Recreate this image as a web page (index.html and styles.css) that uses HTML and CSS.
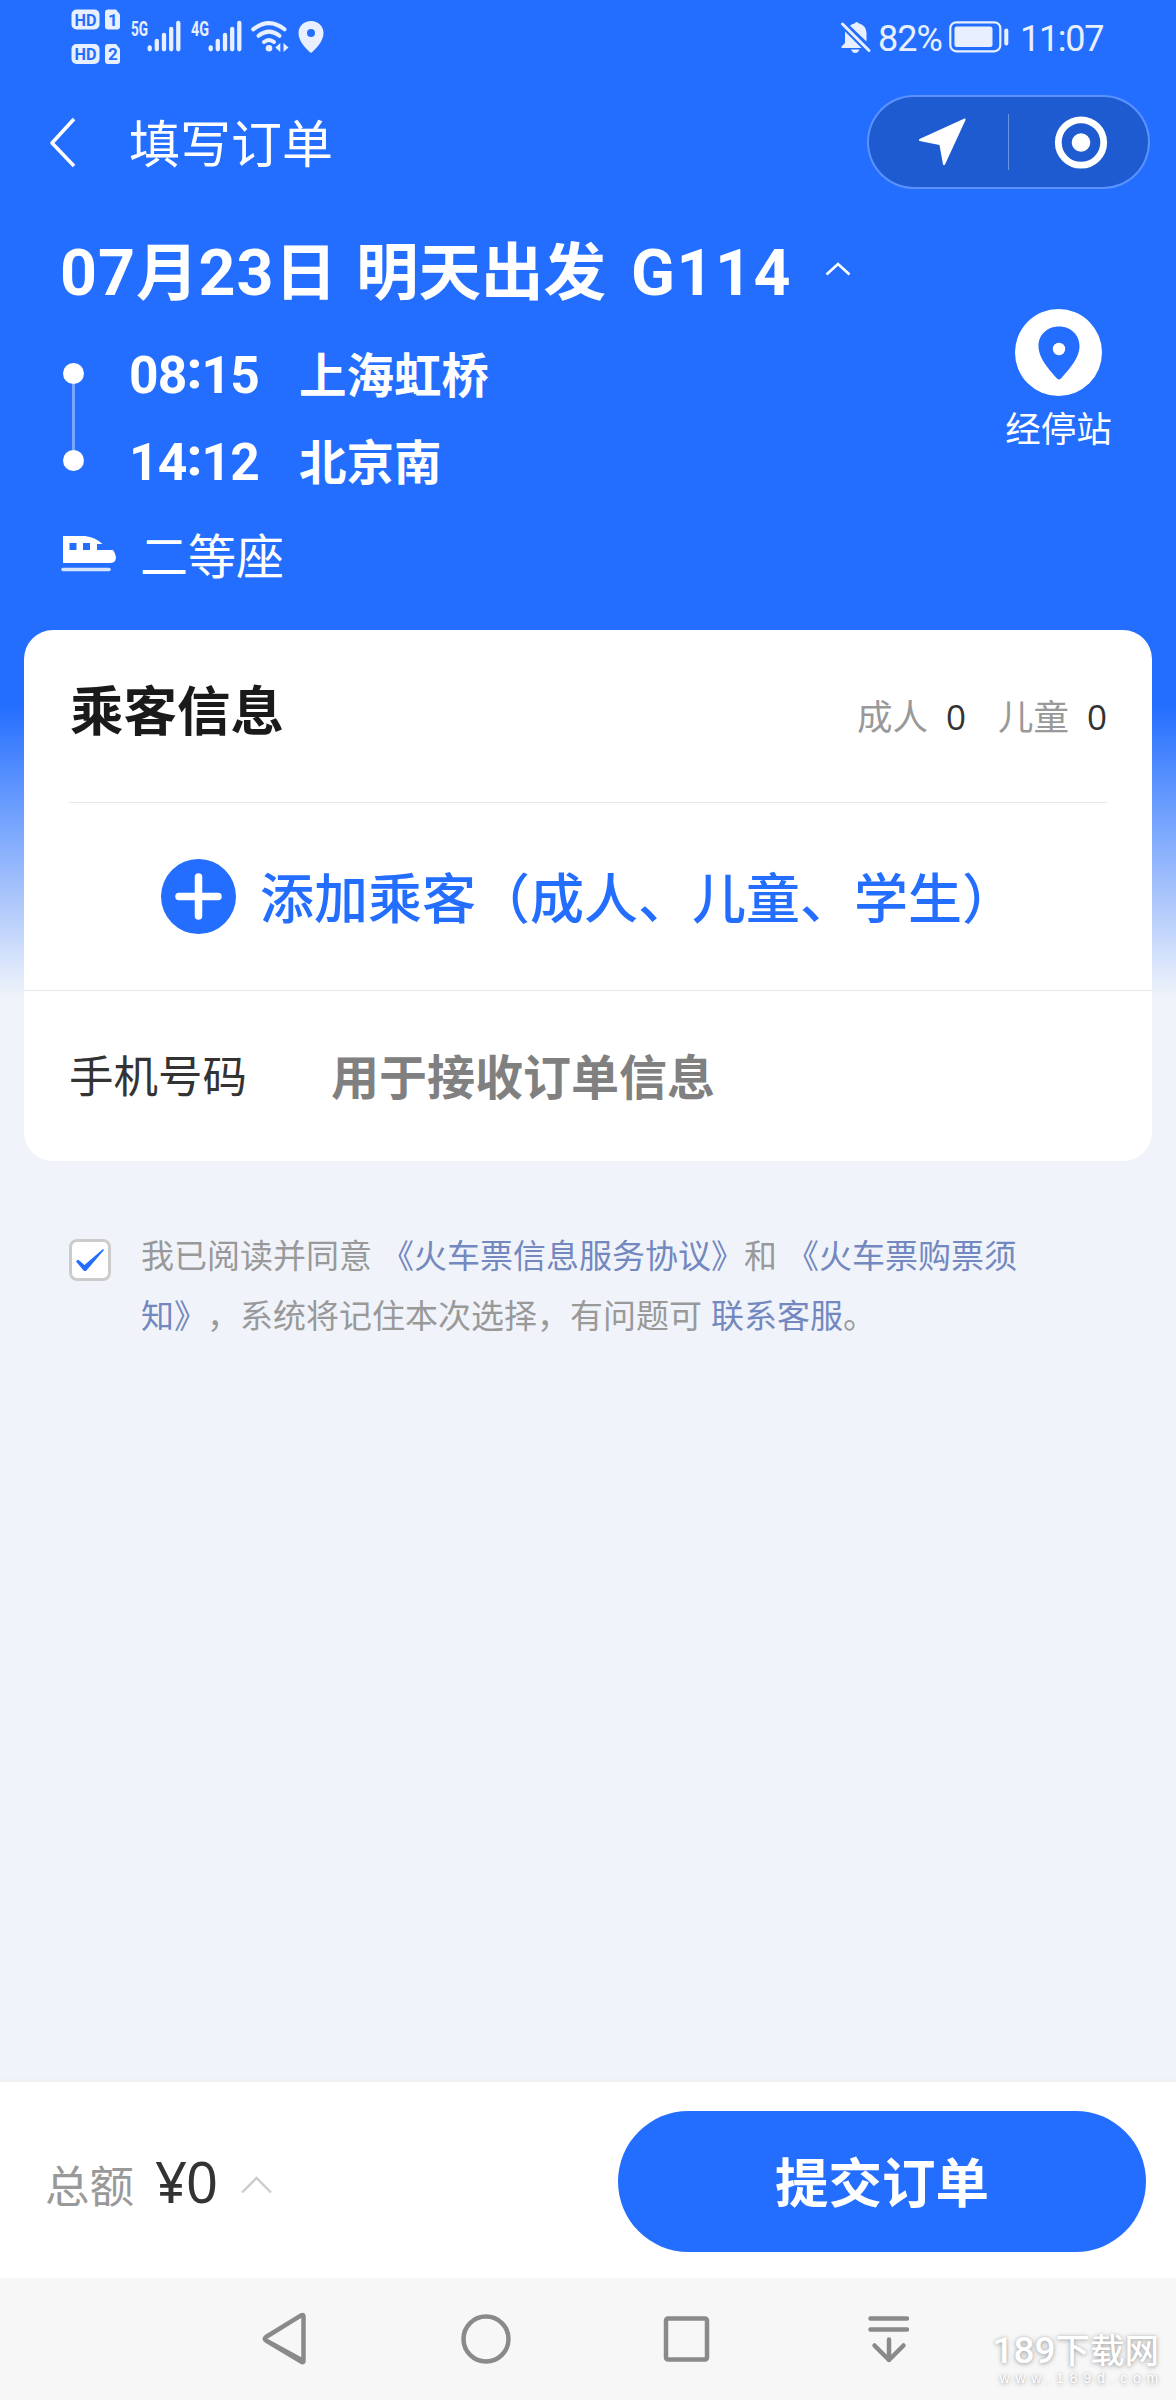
FILE: index.html
```html
<!DOCTYPE html>
<html lang="zh-CN">
<head>
<meta charset="utf-8">
<title>填写订单</title>
<link rel="stylesheet" href="styles.css">
</head>
<body>
<div class="page">
  <header class="status">
    <div class="status-left">
      <svg class="sim" width="50" height="58" viewBox="0 0 50 58">
        <rect x="0.5" y="0.5" width="28" height="20" rx="5" class="lite"/>
        <path d="M37 0.500h8l4 5v12q0 3-3 3h-9q-3 0-3-3v-14q0-3 3-3z" class="lite"/>
        <rect x="0.500" y="35" width="28" height="20" rx="5" class="lite"/>
        <path d="M37 35h8l4 5v12q0 3-3 3h-9q-3 0-3-3v-14q0-3 3-3z" class="lite"/>
        <text x="3.500" y="16.500" textLength="22" lengthAdjust="spacingAndGlyphs" class="badge-text">HD</text>
        <text x="37" y="16.500" class="badge-text">1</text>
        <text x="3.500" y="51" textLength="22" lengthAdjust="spacingAndGlyphs" class="badge-text">HD</text>
        <text x="37" y="51" class="badge-text">2</text>
      </svg>
      <svg class="signal" width="50" height="34" viewBox="0 0 50 34">
        <text x="0" y="15.500" textLength="17" lengthAdjust="spacingAndGlyphs" class="net-text">5G</text>
        <path class="bars" d="M18.700 29.300V27.500M25.800 29.300V21M33 29.300V15M40.200 29.300V9M47.300 29.300V3"/>
      </svg>
      <svg class="signal signal-b" width="51" height="34" viewBox="0 0 51 34">
        <text x="0" y="15.500" textLength="18" lengthAdjust="spacingAndGlyphs" class="net-text">4G</text>
        <path class="bars" d="M19.700 29.300V27.500M26.800 29.300V21M34 29.300V15M41.200 29.300V9M48.300 29.300V3"/>
      </svg>
      <svg class="wifi" width="38" height="34" viewBox="0 0 38 34">
        <g fill="none" stroke="#e8f0ff" stroke-width="4" stroke-linecap="round">
          <path d="M2.200 9.300Q18 -3 33.500 9.300"/>
          <path d="M7.500 15.800Q18 7.500 28.500 15.800"/>
          <path d="M13 22Q18 18 23 22"/>
        </g>
        <circle cx="18" cy="28.300" r="3.300" class="lite"/>
        <path d="M29.300 23v9l-5-4.500zM32.500 32v-9l5 4.500z" class="lite"/>
      </svg>
      <svg class="pin" width="26" height="32" viewBox="0 0 26 32">
        <path fill-rule="evenodd" class="lite" d="M13 0C5.800 0 .5 5.300.500 12c0 8 7 15.500 12.500 20C18.500 27.500 25.500 20 25.500 12 25.500 5.300 20.200 0 13 0zM13 8a4 4 0 1 1 0 8 4 4 0 0 1 0-8z"/>
      </svg>
    </div>
    <div class="status-right">
      <svg width="32" height="34" viewBox="0 0 32 34">
        <path d="M5 10.500L21.500 27H1.500v-1.500L5 22zM10 4.800Q12 3 14.500 2.500q2-3 4.500 0 7 1.800 7.500 9V20.500zM11 28.500h8.500q-1.500 3.500-4.250 3.500T11 28.500z" class="lite"/>
        <path d="M2.500 3L29 29.500" stroke="#e8f0ff" stroke-width="3" stroke-linecap="round"/>
      </svg>
      <span class="pct">82%</span>
      <svg width="60" height="32" viewBox="0 0 60 32">
        <rect x="1.300" y="1.300" width="50" height="29" rx="6" fill="none" stroke="#e8f0ff" stroke-width="2.200"/>
        <rect x="5.500" y="5.500" width="38" height="20.500" rx="2.500" class="lite"/>
        <rect x="55.300" y="7.500" width="4" height="17" rx="2" class="lite"/>
      </svg>
      <span class="clock">11:07</span>
    </div>
  </header>

  <nav class="titlebar">
    <svg class="back" width="28" height="50" viewBox="0 0 28 50">
      <path d="M26 2L4 26l22 23" fill="none" stroke="#fff" stroke-width="3.500" stroke-linejoin="round"/>
    </svg>
    <h1 class="title">填写订单</h1>
    <div class="capsule">
      <span class="cap-cell">
        <svg width="48" height="48" viewBox="0 0 48 48"><path d="M46.500.600Q48 .300 47.500 2L27 46.500q-1 1.500-2 0L21.500 27 1.500 23q-1.500-1 0-2z" fill="#fff"/></svg>
      </span>
      <span class="cap-cell cap-right">
        <svg width="54" height="54" viewBox="0 0 54 54"><circle cx="26" cy="27.500" r="22.700" fill="none" stroke="#fff" stroke-width="6.800"/><circle cx="26" cy="27.500" r="9.300" fill="#fff"/></svg>
      </span>
    </div>
  </nav>

  <section class="trip">
    <div class="trip-main">
      <h2 class="headline"><span class="num">07</span>月<span class="num">23</span>日<span class="day">明天出发</span><span class="num train-no">G114</span>
        <svg class="caret" width="26" height="14" viewBox="0 0 26 14"><path d="M1.500 12.500L13 2l11.500 10.500" fill="none" stroke="#fff" stroke-width="2.600"/></svg>
      </h2>
      <div class="stops">
        <div class="rail"><i class="dot"></i><i class="line"></i><i class="dot"></i></div>
        <div class="stop-list">
          <div class="stop"><span class="time">08<b class="colon">:</b>15</span><span>上海虹桥</span></div>
          <div class="stop"><span class="time">14<b class="colon">:</b>12</span><span>北京南</span></div>
        </div>
      </div>
      <div class="seat">
        <svg width="53" height="36" viewBox="0 0 53 36">
          <path fill-rule="evenodd" fill="#fff" d="M0 0H22Q32 1 39.500 8H34V14H50Q54 20 52.500 24 51.500 27 47 27H0zM6.500 7v7h7V7zM20 7v7h7V7z"/>
          <path d="M0 33.500H46" stroke="#d6e4ff" stroke-width="3.500" stroke-linecap="round"/>
        </svg>
        <span>二等座</span>
      </div>
    </div>
    <div class="via">
      <svg width="87" height="87" viewBox="0 0 87 87">
        <circle cx="43.500" cy="43.500" r="43.500" fill="#fff"/>
        <path d="M44 17.500C32 17.500 23.500 26 23.500 37c0 13 12 25 18.500 32.500q2 2 4 0C52.500 62 64.500 50 64.500 37 64.500 26 56 17.500 44 17.500z" fill="#246eff"/>
        <circle cx="44" cy="40" r="6.200" fill="#fff"/>
      </svg>
      <span>经停站</span>
    </div>
  </section>

  <main class="content">
    <section class="card">
      <div class="card-head">
        <h3>乘客信息</h3>
        <div class="counts"><span>成人</span><b>0</b><span class="kid">儿童</span><b>0</b></div>
      </div>
      <div class="add">
        <svg width="75" height="75" viewBox="0 0 75 75"><circle cx="37.500" cy="37.500" r="37.500" fill="#246eff"/><path d="M37.500 18v39M18 37.500h39" stroke="#fff" stroke-width="7.500" stroke-linecap="round"/></svg>
        <span>添加乘客（成人、儿童、学生）</span>
      </div>
      <div class="phone"><span class="label">手机号码</span><span class="hint">用于接收订单信息</span></div>
    </section>
    <div class="agree">
      <span class="check"><svg width="28" height="23" viewBox="0 0 28 23"><path d="M0 12.500L2 10.500l6.500 5.500L27 0l1 1L10 22H8z" fill="#246eff"/></svg></span>
      <p>我已阅读并同意<a class="gap">《火车票信息服务协议》</a>和<a class="gap">《火车票购票须</a><br><a>知》</a>，系统将记住本次选择，有问题可<a class="gap">联系客服</a>。</p>
    </div>
  </main>

  <footer class="paybar">
    <span class="total">总额</span><span class="price">¥0</span>
    <svg class="up" width="31" height="18" viewBox="0 0 31 18"><path d="M1 16.500L15.500 2 30 16.500" fill="none" stroke="#ccc" stroke-width="2.400"/></svg>
    <button class="submit">提交订单</button>
  </footer>
  <div class="sysnav">
    <svg class="keys" width="660" height="60" viewBox="0 0 660 60" fill="none" stroke="#8a8a8a" stroke-width="4.500" stroke-linecap="round" stroke-linejoin="round">
      <path d="M53.500 8.500V53L16 32.500q-2.500-1.700 0-3.500L51.500 7.200q2-1 2 1.300V52.500q0 2.500-2 1.300L16 32.500"/>
      <circle cx="236" cy="31" r="22.500"/>
      <rect x="416" y="10.500" width="41" height="41" rx="2"/>
      <path d="M620.500 10.500h36.500M620.500 21.500h36.500M639 31.500V52M624.500 37.500L639 52l14.500-14.500"/>
    </svg>
    <div class="mark"><span class="mark-name"><i>189</i>下载网</span><span class="mark-url">www.189d.com</span></div>
  </div>
</div>
</body>
</html>
```
FILE: styles.css
```css
* { box-sizing: border-box; margin: 0; padding: 0; }
body {
  font-family: "Noto Sans CJK SC", "Noto Sans", sans-serif;
  background: #f0f4fa;
  color: #333;
}
svg { display: block; flex: none; overflow: visible; }
.page {
  width: 1176px;
  height: 2400px;
  display: flex;
  flex-direction: column;
  overflow: hidden;
  background: linear-gradient(#246eff 0, #246eff 705px, #f0f4fa 998px);
}
.lite { fill: #e8f0ff; }

/* status bar */
.status { height: 95px; display: flex; justify-content: space-between; padding: 0 71px; color: #e8f0ff; }
.status-left { display: flex; align-items: flex-start; padding-top: 9px; }
.badge-text { font: bold 17px "Roboto", sans-serif; fill: #246eff; }
.net-text { font: bold 20px "Roboto", sans-serif; fill: #e8f0ff; }
.bars { stroke: #e8f0ff; stroke-width: 4.300px; stroke-linecap: round; fill: none; }
.signal { margin: 11px 0 0 10px; }
.signal-b { margin-left: 10px; }
.wifi { margin: 11px 0 0 9px; }
.pin { margin: 12px 0 0 9px; }
.status-right { display: flex; align-items: flex-start; padding-top: 21px; font: 36px/36px "Roboto", sans-serif; }
.pct { margin: 0 6px 0 6px; width: 65px; letter-spacing: -1px; }
.clock { margin-left: 11px; width: 85px; letter-spacing: -1.300px; }

/* title bar */
.titlebar { height: 94px; display: flex; align-items: center; padding: 0 26px 0 48px; color: #fff; }
.title { margin: 0 0 2px 53px; font-size: 51px; font-weight: 400; line-height: 70px; flex: 1; }
.capsule { width: 283px; height: 94px; display: flex; align-items: center; border: 2px solid rgba(255, 255, 255, .25); border-radius: 47px; background: #1e5ad0; background-clip: padding-box; }
.cap-cell { flex: 1; height: 56px; display: flex; align-items: center; justify-content: center; padding-left: 6px; }
.cap-right { border-left: 1px solid rgba(255, 255, 255, .35); }

/* trip summary */
.trip { height: 441px; display: flex; justify-content: space-between; padding: 39px 60px 0; color: #fff; }
.headline { display: flex; align-items: baseline; font-size: 62.500px; font-weight: 700; line-height: 80px; height: 80px; white-space: nowrap; }
.num { font-family: "Roboto", sans-serif; font-size: 64.500px; letter-spacing: 1px; }
.day { margin-left: 19px; }
.train-no { margin-left: 25px; letter-spacing: 1.500px; }
.caret { align-self: center; margin: 1px 0 0 33px; }
.stops { display: flex; margin-top: 21px; }
.rail { width: 26px; display: flex; flex-direction: column; align-items: center; padding: 34px 0 32px; }
.dot { width: 21px; height: 21px; border-radius: 50%; background: #fff; }
.line { flex: 1; width: 3px; background: #79a6ff; }
.stop { height: 87px; display: flex; align-items: baseline; line-height: 87px; font-size: 47.500px; font-weight: 700; }
.time { width: 170px; margin-left: 43px; font-family: "Roboto", sans-serif; font-size: 51.500px; line-height: 60px; letter-spacing: -.700px; }
.colon { line-height: 0; vertical-align: .1em; }
.seat { display: flex; align-items: center; margin: 20px 0 0 3px; height: 60px; font-size: 48px; line-height: 60px; }
.seat svg { margin-top: 2px; }
.seat span { margin: 0 0 1px 24px; }
.via { display: flex; flex-direction: column; align-items: center; width: 115px; padding-top: 81px; font-size: 35.500px; line-height: 50px; }
.via span { margin-top: 6px; white-space: nowrap; }

/* passenger card */
.content { flex: 1; padding: 0 24px; }
.card { background: #fff; border-radius: 29px; height: 531px; }
.card-head { height: 173px; margin: 0 45px; display: flex; justify-content: space-between; align-items: flex-start; border-bottom: 1px solid #e8e8e8; padding-top: 38px; }
.card-head h3 { font-size: 53.500px; line-height: 80px; color: #1a1a1a; margin-left: 1px; }
.counts { display: flex; align-items: baseline; font-size: 35.500px; line-height: 60px; color: #999; padding-top: 17px; }
.counts b { font-weight: 500; color: #333; font-family: "Open Sans", sans-serif; font-size: 35px; margin-left: 18px; }
.kid { margin-left: 32px; }
.add { height: 188px; display: flex; align-items: center; border-bottom: 1px solid #e8e8e8; padding-left: 137px; color: #246eff; font-size: 54px; font-weight: 500; white-space: nowrap; }
.add span { margin: 0 0 2px 24px; line-height: 80px; }
.phone { height: 170px; display: flex; align-items: center; padding: 0 46px 4px 45px; line-height: 60px; }
.label { width: 262px; font-size: 44.500px; color: #333; }
.hint { font-size: 48px; font-weight: 700; color: #808080; }

/* agreement */
.agree { display: flex; padding: 62px 0 0 45px; font-size: 33px; line-height: 60px; color: #999; white-space: nowrap; text-spacing-trim: space-all; }
.check { flex: none; width: 42px; height: 42px; margin: 16px 30px 0 0; border: 3px solid #ccc; border-radius: 8px; background: #fff; display: flex; align-items: center; justify-content: center; }
.agree p { margin-top: 1px; }
.agree a { color: #7488c0; }
.agree .gap { margin-left: 9px; }

/* payment bar */
.paybar { height: 199px; border-top: 3px solid #eef0f3; background: #fff; display: flex; align-items: center; padding: 2px 30px 0 45px; }
.total { font-size: 44.500px; color: #999; line-height: 60px; margin-top: 6px; }
.price { font-size: 56px; line-height: 60px; margin: 0 0 0 21px; font-family: "Noto Sans", sans-serif; letter-spacing: -1px; }
.up { margin: 8px 0 0 24px; }
.submit { width: 528px; height: 141px; margin-left: auto; padding-bottom: 3px; border: 0; border-radius: 71px; background: #246eff; color: #fff; font: 700 53.500px/80px "Noto Sans CJK SC", sans-serif; }

/* system navigation */
.sysnav { height: 122px; background: #f7f7f7; display: flex; justify-content: space-between; padding: 0 17px 0 250px; }
.keys { margin-top: 30px; }
.mark { display: flex; flex-direction: column; align-items: flex-end; padding-top: 49px; color: #fff; white-space: nowrap; text-shadow: 0 1px 5px rgba(0, 0, 0, .35), 0 0 2px rgba(0, 0, 0, .12); }
.mark-name { font-size: 34.500px; line-height: 42px; font-weight: 500; }
.mark-name i { font: 500 37px "Roboto", sans-serif; line-height: 1; }
.mark-url { font: 14px/14px "Liberation Sans", sans-serif; letter-spacing: 5.800px; margin: 2px -5px 0 0; }
```
